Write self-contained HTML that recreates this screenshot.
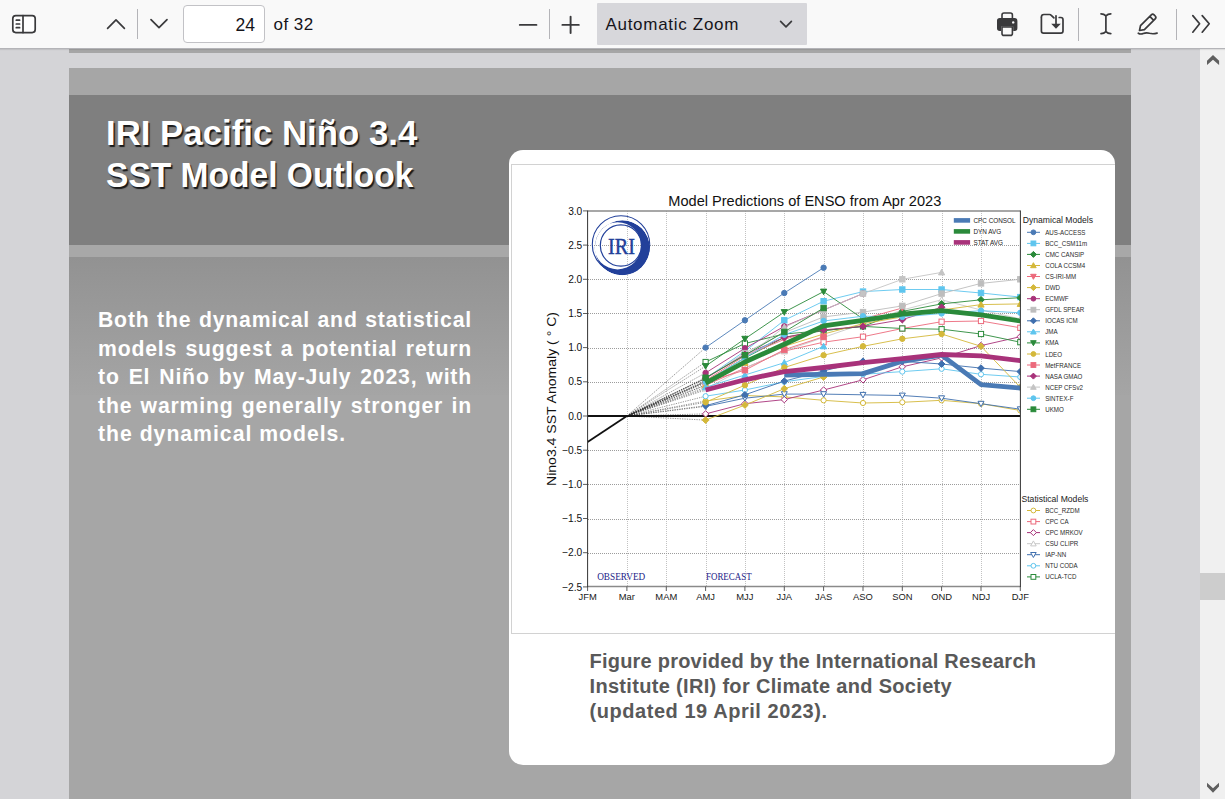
<!DOCTYPE html>
<html><head><meta charset="utf-8">
<style>
html,body{margin:0;padding:0;width:1225px;height:799px;overflow:hidden;background:#d4d4d7;font-family:"Liberation Sans",sans-serif;}
.abs{position:absolute;}
#tb{left:0;top:0;width:1225px;height:48px;background:#f9f9f9;border-bottom:1px solid #b4b4b8;z-index:5;box-shadow:0 1px 1px rgba(0,0,0,0.08);}
.sep{position:absolute;width:1px;background:#b4b4b8;}
#pageinput{left:183px;top:5px;width:82px;height:37.5px;border:1px solid #c2c2c6;border-radius:4px;background:#fff;box-sizing:border-box;}
#prevbot{left:69px;top:48px;width:1062px;height:5px;background:#a6a6a6;}
#page{left:69px;top:68px;width:1062px;height:731px;background:#a6a6a6;overflow:hidden;}
#band{left:0;top:27px;width:1062px;height:150px;background:#7f7f7f;}
#strip{left:0;top:177px;width:1062px;height:12px;background:#a8a8a8;}
#grad{left:0;top:189px;width:1062px;height:138px;background:linear-gradient(#929292,#a5a5a5);}
.ttl{left:36.8px;color:#fff;font-weight:bold;font-size:35.5px;line-height:42px;text-shadow:1.5px 1.5px 1px #1a1a1a;white-space:nowrap;transform-origin:0 0;}
.bl{left:29px;width:374px;height:28.4px;color:#fff;font-weight:bold;font-size:21.2px;letter-spacing:0.82px;line-height:28.4px;text-align:justify;text-align-last:justify;overflow:visible;}
#box{left:508.5px;top:150px;width:606.5px;height:615px;background:#fff;border-radius:14px;}
#imgb{left:511px;top:164px;width:604px;height:470px;border:1px solid #d2d2d2;border-right:none;box-sizing:border-box;}
#cap{left:589.5px;top:648.7px;color:#595959;font-weight:bold;font-size:20px;line-height:25.2px;letter-spacing:0.32px;white-space:nowrap;}
#sb{left:1200px;top:48px;width:25px;height:751px;background:#f0f0f0;}
#thumb{left:1200px;top:573px;width:25px;height:27px;background:#cdcdcd;}
svg text{font-family:"Liberation Sans",sans-serif;}
</style></head><body>
<div id="tb" class="abs">
 <svg class="abs" style="left:0;top:0" width="1225" height="48">
  <g fill="none" stroke="#3a3a3c" stroke-width="1.7" stroke-linecap="round" stroke-linejoin="round">
   <rect x="12.8" y="15.6" width="22.4" height="17" rx="3" fill="#fff"/>
   <line x1="23" y1="15.6" x2="23" y2="32.6"/>
   <line x1="16.3" y1="20.2" x2="19.6" y2="20.2"/><line x1="16.3" y1="24" x2="19.6" y2="24"/><line x1="16.3" y1="27.7" x2="19.6" y2="27.7"/>
   <polyline points="107.6,28.3 116,19.9 124.4,28.3"/>
   <polyline points="151,19.6 159,27.6 167,19.6"/>
   <line x1="519.8" y1="24.9" x2="536.4" y2="24.9" stroke-width="1.9"/>
   <line x1="562.4" y1="24.9" x2="578.8" y2="24.9" stroke-width="1.9"/><line x1="570.6" y1="16.7" x2="570.6" y2="33.1" stroke-width="1.9"/>
   <path d="M1041.4,17 a2.5,2.5 0 0 1 2.5,-2.5 h5.6 a2.5,2.5 0 0 1 1.8,0.8 l2.6,2.6" />
   <path d="M1059.2,17.5 h1.6 a2.2,2.2 0 0 1 2.2,2.2 v11.3 a2.2,2.2 0 0 1 -2.2,2.2 h-17.2 a2.2,2.2 0 0 1 -2.2,-2.2 v-13.5"/>
   <line x1="1056" y1="15.8" x2="1056" y2="25"/>
   <path d="M1101,13.8 q3,0 4.9,2 q1.9,-2 4.9,-2 M1101,33.6 q3,0 4.9,-2 q1.9,2 4.9,2 M1105.9,15.8 v15.8"/>
   <path d="M1139.5,30.5 l1,-4.8 l10.8,-10.8 a2,2 0 0 1 2.8,0 l1.1,1.1 a2,2 0 0 1 0,2.8 l-10.8,10.8 z M1149.8,16.4 l3.9,3.9"/>
   <path d="M1138.3,33.2 q2.2,1.4 5,0.3 q3,-1.2 6.2,-0.2 q3.5,1 7.6,-0.2"/>
   <polyline points="1192.8,15.6 1199.6,23.8 1192.8,32.2"/><polyline points="1202.2,15.6 1209.2,23.8 1202.2,32.2"/>
  </g>
  <path d="M1051.2,23.8 h9.6 l-4.8,5 z" fill="#3a3a3c"/>
  <g fill="#3a3a3c">
   <path d="M1001.2,18.6 v-3.6 a2.8,2.8 0 0 1 2.8,-2.8 h6.4 a2.8,2.8 0 0 1 2.8,2.8 v3.6 h-1.6 v-3.6 a1.2,1.2 0 0 0 -1.2,-1.2 h-6.4 a1.2,1.2 0 0 0 -1.2,1.2 v3.6 z"/>
   <path d="M999.8,18 h14.8 a2.8,2.8 0 0 1 2.8,2.8 v7.4 a2.8,2.8 0 0 1 -2.8,2.8 h-1.4 v-4.4 h-12.2 v4.4 h-1.2 a2.8,2.8 0 0 1 -2.8,-2.8 v-7.4 a2.8,2.8 0 0 1 2.8,-2.8 z"/>
   <path d="M1001.2,26.2 h12 v7.2 a2.8,2.8 0 0 1 -2.8,2.8 h-6.4 a2.8,2.8 0 0 1 -2.8,-2.8 z M1002.8,27.8 v5.6 a1.2,1.2 0 0 0 1.2,1.2 h6.4 a1.2,1.2 0 0 0 1.2,-1.2 v-5.6 z" fill-rule="evenodd"/>
  </g>
  <circle cx="1013.2" cy="22.4" r="1.2" fill="#f9f9fb"/>
 </svg>
 <div class="sep" style="left:137px;top:9px;height:30px;"></div>
 <div class="sep" style="left:549px;top:9px;height:30px;"></div>
 <div class="sep" style="left:1078px;top:8px;height:33px;"></div>
 <div class="sep" style="left:1175.5px;top:8.5px;height:31.5px;"></div>
 <div id="pageinput" class="abs"></div>
 <div class="abs" style="left:200px;top:12.9px;width:55px;text-align:right;font-size:17.5px;line-height:24px;color:#15141a;">24</div>
 <div class="abs" style="left:273.5px;top:12.9px;font-size:17px;letter-spacing:0.45px;line-height:24px;color:#15141a;">of 32</div>
 <div class="abs" style="left:597px;top:3px;width:210px;height:42px;background:#d7d7db;border-radius:1px;"></div>
 <div class="abs" style="left:605.5px;top:12.9px;font-size:17px;letter-spacing:0.7px;line-height:24px;color:#15141a;">Automatic Zoom</div>
 <svg class="abs" style="left:770px;top:10px" width="30" height="30"><polyline points="10.6,11.4 16,16.8 21.4,11.4" fill="none" stroke="#3a3a3c" stroke-width="1.7" stroke-linecap="round" stroke-linejoin="round"/></svg>
</div>
<div id="prevbot" class="abs"></div>
<div id="page" class="abs">
 <div id="band" class="abs"></div>
 <div id="strip" class="abs"></div>
 <div id="grad" class="abs"></div>
 <div class="abs ttl" style="top:43.6px;transform:scaleX(0.98);">IRI Pacific Niño 3.4</div>
 <div class="abs ttl" style="top:85.8px;transform:scaleX(0.945);">SST Model Outlook</div>
 <div class="bl abs" style="top:238.3px">Both the dynamical and statistical</div>
 <div class="bl abs" style="top:266.7px">models suggest a potential return</div>
 <div class="bl abs" style="top:295.1px">to El Niño by May-July 2023, with</div>
 <div class="bl abs" style="top:323.5px">the warming generally stronger in</div>
 <div class="abs" style="left:29px;top:351.9px;color:#fff;font-weight:bold;font-size:21.2px;letter-spacing:1.0px;line-height:28.4px;white-space:nowrap;">the dynamical models.</div>
</div>
<div id="box" class="abs"></div>
<div id="imgb" class="abs"></div>
<svg class="abs" style="left:0;top:0" width="1225" height="799">
<line x1="627.5" y1="211" x2="627.5" y2="587" stroke="#c2c2c2" stroke-width="1" stroke-dasharray="1,1"/>
<line x1="666.5" y1="211" x2="666.5" y2="587" stroke="#c2c2c2" stroke-width="1" stroke-dasharray="1,1"/>
<line x1="706.5" y1="211" x2="706.5" y2="587" stroke="#c2c2c2" stroke-width="1" stroke-dasharray="1,1"/>
<line x1="745.5" y1="211" x2="745.5" y2="587" stroke="#c2c2c2" stroke-width="1" stroke-dasharray="1,1"/>
<line x1="784.5" y1="211" x2="784.5" y2="587" stroke="#c2c2c2" stroke-width="1" stroke-dasharray="1,1"/>
<line x1="824.5" y1="211" x2="824.5" y2="587" stroke="#c2c2c2" stroke-width="1" stroke-dasharray="1,1"/>
<line x1="863.5" y1="211" x2="863.5" y2="587" stroke="#c2c2c2" stroke-width="1" stroke-dasharray="1,1"/>
<line x1="902.5" y1="211" x2="902.5" y2="587" stroke="#c2c2c2" stroke-width="1" stroke-dasharray="1,1"/>
<line x1="942.5" y1="211" x2="942.5" y2="587" stroke="#c2c2c2" stroke-width="1" stroke-dasharray="1,1"/>
<line x1="981.5" y1="211" x2="981.5" y2="587" stroke="#c2c2c2" stroke-width="1" stroke-dasharray="1,1"/>
<line x1="588" y1="553.5" x2="1020" y2="553.5" stroke="#9c9c9c" stroke-width="1" stroke-dasharray="1,1"/>
<line x1="588" y1="519.5" x2="1020" y2="519.5" stroke="#9c9c9c" stroke-width="1" stroke-dasharray="1,1"/>
<line x1="588" y1="484.5" x2="1020" y2="484.5" stroke="#9c9c9c" stroke-width="1" stroke-dasharray="1,1"/>
<line x1="588" y1="450.5" x2="1020" y2="450.5" stroke="#9c9c9c" stroke-width="1" stroke-dasharray="1,1"/>
<line x1="588" y1="382.5" x2="1020" y2="382.5" stroke="#9c9c9c" stroke-width="1" stroke-dasharray="1,1"/>
<line x1="588" y1="348.5" x2="1020" y2="348.5" stroke="#9c9c9c" stroke-width="1" stroke-dasharray="1,1"/>
<line x1="588" y1="313.5" x2="1020" y2="313.5" stroke="#9c9c9c" stroke-width="1" stroke-dasharray="1,1"/>
<line x1="588" y1="279.5" x2="1020" y2="279.5" stroke="#9c9c9c" stroke-width="1" stroke-dasharray="1,1"/>
<line x1="588" y1="245.5" x2="1020" y2="245.5" stroke="#9c9c9c" stroke-width="1" stroke-dasharray="1,1"/>
<g fill="none" stroke="#22409a"><circle cx="621" cy="244.4" r="28.7" stroke-width="1.1"/><circle cx="620.9" cy="245.5" r="20.6" stroke-width="1.2"/></g>
<clipPath id="lc"><circle cx="622.3" cy="247.8" r="27.5"/></clipPath>
<path clip-path="url(#lc)" fill="#22409a" fill-rule="evenodd" d="M649.8,247.8 a27.5,27.5 0 1 1 -55,0 a27.5,27.5 0 1 1 55,0 Z M641.2,245.8 a23.6,23.6 0 1 1 -47.2,0 a23.6,23.6 0 1 1 47.2,0 Z"/>
<text x="621.5" y="253.5" text-anchor="middle" style="font-family:&quot;Liberation Serif&quot;,serif" font-size="23.5" fill="#22409a" stroke="#22409a" stroke-width="0.45" textLength="27" lengthAdjust="spacingAndGlyphs">IRI</text>
<defs><clipPath id="pc"><rect x="587.6" y="210" width="432.7" height="377"/></clipPath></defs><g clip-path="url(#pc)">
<line x1="626.9" y1="416.0" x2="705.6" y2="347.6" stroke="#333" stroke-width="0.5" stroke-dasharray="1.3,1.1"/>
<line x1="626.9" y1="416.0" x2="705.6" y2="378.4" stroke="#333" stroke-width="0.5" stroke-dasharray="1.3,1.1"/>
<line x1="626.9" y1="416.0" x2="705.6" y2="381.8" stroke="#333" stroke-width="0.5" stroke-dasharray="1.3,1.1"/>
<line x1="626.9" y1="416.0" x2="705.6" y2="385.2" stroke="#333" stroke-width="0.5" stroke-dasharray="1.3,1.1"/>
<line x1="626.9" y1="416.0" x2="705.6" y2="380.5" stroke="#333" stroke-width="0.5" stroke-dasharray="1.3,1.1"/>
<line x1="626.9" y1="416.0" x2="705.6" y2="420.1" stroke="#333" stroke-width="0.5" stroke-dasharray="1.3,1.1"/>
<line x1="626.9" y1="416.0" x2="705.6" y2="372.9" stroke="#333" stroke-width="0.5" stroke-dasharray="1.3,1.1"/>
<line x1="626.9" y1="416.0" x2="705.6" y2="378.4" stroke="#333" stroke-width="0.5" stroke-dasharray="1.3,1.1"/>
<line x1="626.9" y1="416.0" x2="705.6" y2="405.7" stroke="#333" stroke-width="0.5" stroke-dasharray="1.3,1.1"/>
<line x1="626.9" y1="416.0" x2="705.6" y2="387.3" stroke="#333" stroke-width="0.5" stroke-dasharray="1.3,1.1"/>
<line x1="626.9" y1="416.0" x2="705.6" y2="366.1" stroke="#333" stroke-width="0.5" stroke-dasharray="1.3,1.1"/>
<line x1="626.9" y1="416.0" x2="705.6" y2="402.3" stroke="#333" stroke-width="0.5" stroke-dasharray="1.3,1.1"/>
<line x1="626.9" y1="416.0" x2="705.6" y2="381.8" stroke="#333" stroke-width="0.5" stroke-dasharray="1.3,1.1"/>
<line x1="626.9" y1="416.0" x2="705.6" y2="378.4" stroke="#333" stroke-width="0.5" stroke-dasharray="1.3,1.1"/>
<line x1="626.9" y1="416.0" x2="705.6" y2="381.8" stroke="#333" stroke-width="0.5" stroke-dasharray="1.3,1.1"/>
<line x1="626.9" y1="416.0" x2="705.6" y2="381.8" stroke="#333" stroke-width="0.5" stroke-dasharray="1.3,1.1"/>
<line x1="626.9" y1="416.0" x2="705.6" y2="377.7" stroke="#333" stroke-width="0.5" stroke-dasharray="1.3,1.1"/>
<line x1="626.9" y1="416.0" x2="705.6" y2="401.0" stroke="#333" stroke-width="0.5" stroke-dasharray="1.3,1.1"/>
<line x1="626.9" y1="416.0" x2="705.6" y2="385.2" stroke="#333" stroke-width="0.5" stroke-dasharray="1.3,1.1"/>
<line x1="626.9" y1="416.0" x2="705.6" y2="413.9" stroke="#333" stroke-width="0.5" stroke-dasharray="1.3,1.1"/>
<line x1="626.9" y1="416.0" x2="705.6" y2="388.7" stroke="#333" stroke-width="0.5" stroke-dasharray="1.3,1.1"/>
<line x1="626.9" y1="416.0" x2="705.6" y2="406.4" stroke="#333" stroke-width="0.5" stroke-dasharray="1.3,1.1"/>
<line x1="626.9" y1="416.0" x2="705.6" y2="396.2" stroke="#333" stroke-width="0.5" stroke-dasharray="1.3,1.1"/>
<line x1="626.9" y1="416.0" x2="705.6" y2="362.0" stroke="#333" stroke-width="0.5" stroke-dasharray="1.3,1.1"/>
<line x1="626.9" y1="416.0" x2="705.6" y2="383.2" stroke="#333" stroke-width="0.5" stroke-dasharray="1.3,1.1"/>
<line x1="626.9" y1="416.0" x2="705.6" y2="390.0" stroke="#333" stroke-width="0.5" stroke-dasharray="1.3,1.1"/>
<line x1="587.6" y1="416.0" x2="1020.3" y2="416.0" stroke="#111" stroke-width="1.8"/>
<line x1="587.6" y1="442.0" x2="626.9" y2="416.0" stroke="#111" stroke-width="1.8"/>
<polyline points="705.6,401.0 744.9,395.5 784.3,396.9 823.6,400.3 863.0,403.0 902.3,402.3 941.6,400.3 981.0,403.7 1020.3,410.5" fill="none" stroke="#d4b83a" stroke-width="0.9" stroke-linejoin="round"/>
<circle cx="705.6" cy="401.0" r="2.6" fill="white" stroke="#d4b83a" stroke-width="1.0"/>
<circle cx="744.9" cy="395.5" r="2.6" fill="white" stroke="#d4b83a" stroke-width="1.0"/>
<circle cx="784.3" cy="396.9" r="2.6" fill="white" stroke="#d4b83a" stroke-width="1.0"/>
<circle cx="823.6" cy="400.3" r="2.6" fill="white" stroke="#d4b83a" stroke-width="1.0"/>
<circle cx="863.0" cy="403.0" r="2.6" fill="white" stroke="#d4b83a" stroke-width="1.0"/>
<circle cx="902.3" cy="402.3" r="2.6" fill="white" stroke="#d4b83a" stroke-width="1.0"/>
<circle cx="941.6" cy="400.3" r="2.6" fill="white" stroke="#d4b83a" stroke-width="1.0"/>
<circle cx="981.0" cy="403.7" r="2.6" fill="white" stroke="#d4b83a" stroke-width="1.0"/>
<circle cx="1020.3" cy="410.5" r="2.6" fill="white" stroke="#d4b83a" stroke-width="1.0"/>
<polyline points="705.6,385.2 744.9,368.1 784.3,351.1 823.6,342.2 863.0,336.7 902.3,328.5 941.6,321.7 981.0,321.0 1020.3,327.8" fill="none" stroke="#ec6a7c" stroke-width="0.9" stroke-linejoin="round"/>
<rect x="703.0" y="382.6" width="5.2" height="5.2" fill="white" stroke="#ec6a7c" stroke-width="1.0"/>
<rect x="742.3" y="365.5" width="5.2" height="5.2" fill="white" stroke="#ec6a7c" stroke-width="1.0"/>
<rect x="781.7" y="348.5" width="5.2" height="5.2" fill="white" stroke="#ec6a7c" stroke-width="1.0"/>
<rect x="821.0" y="339.6" width="5.2" height="5.2" fill="white" stroke="#ec6a7c" stroke-width="1.0"/>
<rect x="860.4" y="334.1" width="5.2" height="5.2" fill="white" stroke="#ec6a7c" stroke-width="1.0"/>
<rect x="899.7" y="325.9" width="5.2" height="5.2" fill="white" stroke="#ec6a7c" stroke-width="1.0"/>
<rect x="939.0" y="319.1" width="5.2" height="5.2" fill="white" stroke="#ec6a7c" stroke-width="1.0"/>
<rect x="978.4" y="318.4" width="5.2" height="5.2" fill="white" stroke="#ec6a7c" stroke-width="1.0"/>
<rect x="1017.7" y="325.2" width="5.2" height="5.2" fill="white" stroke="#ec6a7c" stroke-width="1.0"/>
<polyline points="705.6,413.9 744.9,403.7 784.3,399.6 823.6,390.0 863.0,379.8 902.3,366.8 941.6,357.9 981.0,345.6 1020.3,336.7" fill="none" stroke="#a8327a" stroke-width="0.9" stroke-linejoin="round"/>
<path d="M705.6,410.7 L708.9,413.9 L705.6,417.2 L702.4,413.9 Z" fill="white" stroke="#a8327a" stroke-width="1.0"/>
<path d="M744.9,400.4 L748.2,403.7 L744.9,406.9 L741.7,403.7 Z" fill="white" stroke="#a8327a" stroke-width="1.0"/>
<path d="M784.3,396.3 L787.5,399.6 L784.3,402.8 L781.0,399.6 Z" fill="white" stroke="#a8327a" stroke-width="1.0"/>
<path d="M823.6,386.8 L826.9,390.0 L823.6,393.3 L820.4,390.0 Z" fill="white" stroke="#a8327a" stroke-width="1.0"/>
<path d="M863.0,376.5 L866.2,379.8 L863.0,383.0 L859.7,379.8 Z" fill="white" stroke="#a8327a" stroke-width="1.0"/>
<path d="M902.3,363.5 L905.5,366.8 L902.3,370.0 L899.0,366.8 Z" fill="white" stroke="#a8327a" stroke-width="1.0"/>
<path d="M941.6,354.6 L944.9,357.9 L941.6,361.1 L938.4,357.9 Z" fill="white" stroke="#a8327a" stroke-width="1.0"/>
<path d="M981.0,342.3 L984.2,345.6 L981.0,348.8 L977.7,345.6 Z" fill="white" stroke="#a8327a" stroke-width="1.0"/>
<path d="M1020.3,333.5 L1023.5,336.7 L1020.3,340.0 L1017.0,336.7 Z" fill="white" stroke="#a8327a" stroke-width="1.0"/>
<polyline points="705.6,388.7 744.9,368.1 784.3,351.1 823.6,337.4 863.0,323.7 902.3,310.0 941.6,299.8 981.0,310.0 1020.3,318.9" fill="none" stroke="#c8c8c8" stroke-width="0.9" stroke-linejoin="round"/>
<path d="M705.6,385.7 L708.6,391.0 L702.6,391.0 Z" fill="white" stroke="#c8c8c8" stroke-width="1.0"/>
<path d="M744.9,365.2 L747.9,370.5 L742.0,370.5 Z" fill="white" stroke="#c8c8c8" stroke-width="1.0"/>
<path d="M784.3,348.1 L787.3,353.4 L781.3,353.4 Z" fill="white" stroke="#c8c8c8" stroke-width="1.0"/>
<path d="M823.6,334.4 L826.6,339.8 L820.6,339.8 Z" fill="white" stroke="#c8c8c8" stroke-width="1.0"/>
<path d="M863.0,320.7 L865.9,326.1 L860.0,326.1 Z" fill="white" stroke="#c8c8c8" stroke-width="1.0"/>
<path d="M902.3,307.1 L905.3,312.4 L899.3,312.4 Z" fill="white" stroke="#c8c8c8" stroke-width="1.0"/>
<path d="M941.6,296.8 L944.6,302.2 L938.6,302.2 Z" fill="white" stroke="#c8c8c8" stroke-width="1.0"/>
<path d="M981.0,307.1 L984.0,312.4 L978.0,312.4 Z" fill="white" stroke="#c8c8c8" stroke-width="1.0"/>
<path d="M1020.3,315.9 L1023.3,321.3 L1017.3,321.3 Z" fill="white" stroke="#c8c8c8" stroke-width="1.0"/>
<polyline points="705.6,406.4 744.9,398.2 784.3,394.1 823.6,394.1 863.0,394.8 902.3,395.5 941.6,398.2 981.0,403.7 1020.3,409.2" fill="none" stroke="#3f6fae" stroke-width="0.9" stroke-linejoin="round"/>
<path d="M705.6,409.4 L708.6,404.0 L702.6,404.0 Z" fill="white" stroke="#3f6fae" stroke-width="1.0"/>
<path d="M744.9,401.2 L747.9,395.8 L742.0,395.8 Z" fill="white" stroke="#3f6fae" stroke-width="1.0"/>
<path d="M784.3,397.1 L787.3,391.7 L781.3,391.7 Z" fill="white" stroke="#3f6fae" stroke-width="1.0"/>
<path d="M823.6,397.1 L826.6,391.7 L820.6,391.7 Z" fill="white" stroke="#3f6fae" stroke-width="1.0"/>
<path d="M863.0,397.8 L865.9,392.4 L860.0,392.4 Z" fill="white" stroke="#3f6fae" stroke-width="1.0"/>
<path d="M902.3,398.5 L905.3,393.1 L899.3,393.1 Z" fill="white" stroke="#3f6fae" stroke-width="1.0"/>
<path d="M941.6,401.2 L944.6,395.8 L938.6,395.8 Z" fill="white" stroke="#3f6fae" stroke-width="1.0"/>
<path d="M981.0,406.7 L984.0,401.3 L978.0,401.3 Z" fill="white" stroke="#3f6fae" stroke-width="1.0"/>
<path d="M1020.3,412.2 L1023.3,406.8 L1017.3,406.8 Z" fill="white" stroke="#3f6fae" stroke-width="1.0"/>
<polyline points="705.6,396.2 744.9,390.0 784.3,381.8 823.6,376.4 863.0,374.3 902.3,371.6 941.6,368.8 981.0,374.3 1020.3,377.0" fill="none" stroke="#5ec5ee" stroke-width="0.9" stroke-linejoin="round"/>
<circle cx="705.6" cy="396.2" r="2.6" fill="white" stroke="#5ec5ee" stroke-width="1.0"/>
<circle cx="744.9" cy="390.0" r="2.6" fill="white" stroke="#5ec5ee" stroke-width="1.0"/>
<circle cx="784.3" cy="381.8" r="2.6" fill="white" stroke="#5ec5ee" stroke-width="1.0"/>
<circle cx="823.6" cy="376.4" r="2.6" fill="white" stroke="#5ec5ee" stroke-width="1.0"/>
<circle cx="863.0" cy="374.3" r="2.6" fill="white" stroke="#5ec5ee" stroke-width="1.0"/>
<circle cx="902.3" cy="371.6" r="2.6" fill="white" stroke="#5ec5ee" stroke-width="1.0"/>
<circle cx="941.6" cy="368.8" r="2.6" fill="white" stroke="#5ec5ee" stroke-width="1.0"/>
<circle cx="981.0" cy="374.3" r="2.6" fill="white" stroke="#5ec5ee" stroke-width="1.0"/>
<circle cx="1020.3" cy="377.0" r="2.6" fill="white" stroke="#5ec5ee" stroke-width="1.0"/>
<polyline points="705.6,362.0 744.9,343.5 784.3,334.0 823.6,330.6 863.0,326.4 902.3,328.5 941.6,329.2 981.0,334.0 1020.3,342.2" fill="none" stroke="#2a8a3a" stroke-width="0.9" stroke-linejoin="round"/>
<rect x="703.0" y="359.4" width="5.2" height="5.2" fill="white" stroke="#2a8a3a" stroke-width="1.0"/>
<rect x="742.3" y="340.9" width="5.2" height="5.2" fill="white" stroke="#2a8a3a" stroke-width="1.0"/>
<rect x="781.7" y="331.4" width="5.2" height="5.2" fill="white" stroke="#2a8a3a" stroke-width="1.0"/>
<rect x="821.0" y="327.9" width="5.2" height="5.2" fill="white" stroke="#2a8a3a" stroke-width="1.0"/>
<rect x="860.4" y="323.8" width="5.2" height="5.2" fill="white" stroke="#2a8a3a" stroke-width="1.0"/>
<rect x="899.7" y="325.9" width="5.2" height="5.2" fill="white" stroke="#2a8a3a" stroke-width="1.0"/>
<rect x="939.0" y="326.6" width="5.2" height="5.2" fill="white" stroke="#2a8a3a" stroke-width="1.0"/>
<rect x="978.4" y="331.4" width="5.2" height="5.2" fill="white" stroke="#2a8a3a" stroke-width="1.0"/>
<rect x="1017.7" y="339.6" width="5.2" height="5.2" fill="white" stroke="#2a8a3a" stroke-width="1.0"/>
<polyline points="705.6,347.6 744.9,320.3 784.3,293.0 823.6,267.7" fill="none" stroke="#4a7ab5" stroke-width="0.9" stroke-linejoin="round"/>
<circle cx="705.6" cy="347.6" r="2.7" fill="#4a7ab5" stroke="#4a7ab5" stroke-width="1.0"/>
<circle cx="744.9" cy="320.3" r="2.7" fill="#4a7ab5" stroke="#4a7ab5" stroke-width="1.0"/>
<circle cx="784.3" cy="293.0" r="2.7" fill="#4a7ab5" stroke="#4a7ab5" stroke-width="1.0"/>
<circle cx="823.6" cy="267.7" r="2.7" fill="#4a7ab5" stroke="#4a7ab5" stroke-width="1.0"/>
<polyline points="705.6,378.4 744.9,351.1 784.3,320.3 823.6,301.2 863.0,291.6 902.3,289.5 941.6,289.5 981.0,293.0 1020.3,297.1" fill="none" stroke="#5ec5ee" stroke-width="0.9" stroke-linejoin="round"/>
<rect x="702.9" y="375.7" width="5.4" height="5.4" fill="#5ec5ee" stroke="#5ec5ee" stroke-width="1.0"/>
<rect x="742.2" y="348.4" width="5.4" height="5.4" fill="#5ec5ee" stroke="#5ec5ee" stroke-width="1.0"/>
<rect x="781.6" y="317.6" width="5.4" height="5.4" fill="#5ec5ee" stroke="#5ec5ee" stroke-width="1.0"/>
<rect x="820.9" y="298.5" width="5.4" height="5.4" fill="#5ec5ee" stroke="#5ec5ee" stroke-width="1.0"/>
<rect x="860.3" y="288.9" width="5.4" height="5.4" fill="#5ec5ee" stroke="#5ec5ee" stroke-width="1.0"/>
<rect x="899.6" y="286.8" width="5.4" height="5.4" fill="#5ec5ee" stroke="#5ec5ee" stroke-width="1.0"/>
<rect x="938.9" y="286.8" width="5.4" height="5.4" fill="#5ec5ee" stroke="#5ec5ee" stroke-width="1.0"/>
<rect x="978.3" y="290.3" width="5.4" height="5.4" fill="#5ec5ee" stroke="#5ec5ee" stroke-width="1.0"/>
<rect x="1017.6" y="294.4" width="5.4" height="5.4" fill="#5ec5ee" stroke="#5ec5ee" stroke-width="1.0"/>
<polyline points="705.6,381.8 744.9,357.9 784.3,337.4 823.6,330.6 863.0,326.4 902.3,311.4 941.6,303.9 981.0,299.8 1020.3,297.7" fill="none" stroke="#2a8a3a" stroke-width="0.9" stroke-linejoin="round"/>
<path d="M705.6,378.4 L709.0,381.8 L705.6,385.2 L702.2,381.8 Z" fill="#2a8a3a" stroke="#2a8a3a" stroke-width="1.0"/>
<path d="M744.9,354.5 L748.3,357.9 L744.9,361.3 L741.6,357.9 Z" fill="#2a8a3a" stroke="#2a8a3a" stroke-width="1.0"/>
<path d="M784.3,334.0 L787.7,337.4 L784.3,340.8 L780.9,337.4 Z" fill="#2a8a3a" stroke="#2a8a3a" stroke-width="1.0"/>
<path d="M823.6,327.2 L827.0,330.6 L823.6,333.9 L820.2,330.6 Z" fill="#2a8a3a" stroke="#2a8a3a" stroke-width="1.0"/>
<path d="M863.0,323.1 L866.3,326.4 L863.0,329.8 L859.6,326.4 Z" fill="#2a8a3a" stroke="#2a8a3a" stroke-width="1.0"/>
<path d="M902.3,308.0 L905.7,311.4 L902.3,314.8 L898.9,311.4 Z" fill="#2a8a3a" stroke="#2a8a3a" stroke-width="1.0"/>
<path d="M941.6,300.5 L945.0,303.9 L941.6,307.3 L938.3,303.9 Z" fill="#2a8a3a" stroke="#2a8a3a" stroke-width="1.0"/>
<path d="M981.0,296.4 L984.3,299.8 L981.0,303.2 L977.6,299.8 Z" fill="#2a8a3a" stroke="#2a8a3a" stroke-width="1.0"/>
<path d="M1020.3,294.4 L1023.7,297.7 L1020.3,301.1 L1016.9,297.7 Z" fill="#2a8a3a" stroke="#2a8a3a" stroke-width="1.0"/>
<polyline points="705.6,385.2 744.9,362.7 784.3,346.3 823.6,334.0 863.0,323.7 902.3,316.9 941.6,310.0 981.0,304.6 1020.3,303.9" fill="none" stroke="#d4b83a" stroke-width="0.9" stroke-linejoin="round"/>
<path d="M705.6,382.1 L708.7,387.7 L702.5,387.7 Z" fill="#d4b83a" stroke="#d4b83a" stroke-width="1.0"/>
<path d="M744.9,359.6 L748.1,365.2 L741.8,365.2 Z" fill="#d4b83a" stroke="#d4b83a" stroke-width="1.0"/>
<path d="M784.3,343.2 L787.4,348.8 L781.2,348.8 Z" fill="#d4b83a" stroke="#d4b83a" stroke-width="1.0"/>
<path d="M823.6,330.9 L826.7,336.5 L820.5,336.5 Z" fill="#d4b83a" stroke="#d4b83a" stroke-width="1.0"/>
<path d="M863.0,320.6 L866.1,326.2 L859.8,326.2 Z" fill="#d4b83a" stroke="#d4b83a" stroke-width="1.0"/>
<path d="M902.3,313.8 L905.4,319.4 L899.2,319.4 Z" fill="#d4b83a" stroke="#d4b83a" stroke-width="1.0"/>
<path d="M941.6,306.9 L944.7,312.5 L938.5,312.5 Z" fill="#d4b83a" stroke="#d4b83a" stroke-width="1.0"/>
<path d="M981.0,301.5 L984.1,307.1 L977.9,307.1 Z" fill="#d4b83a" stroke="#d4b83a" stroke-width="1.0"/>
<path d="M1020.3,300.8 L1023.4,306.4 L1017.2,306.4 Z" fill="#d4b83a" stroke="#d4b83a" stroke-width="1.0"/>
<polyline points="705.6,380.5 744.9,355.8 784.3,339.4 823.6,327.1 863.0,318.9 902.3,308.0" fill="none" stroke="#ec6a7c" stroke-width="0.9" stroke-linejoin="round"/>
<path d="M705.6,383.6 L708.7,378.0 L702.5,378.0 Z" fill="#ec6a7c" stroke="#ec6a7c" stroke-width="1.0"/>
<path d="M744.9,358.9 L748.1,353.4 L741.8,353.4 Z" fill="#ec6a7c" stroke="#ec6a7c" stroke-width="1.0"/>
<path d="M784.3,342.5 L787.4,337.0 L781.2,337.0 Z" fill="#ec6a7c" stroke="#ec6a7c" stroke-width="1.0"/>
<path d="M823.6,330.2 L826.7,324.6 L820.5,324.6 Z" fill="#ec6a7c" stroke="#ec6a7c" stroke-width="1.0"/>
<path d="M863.0,322.0 L866.1,316.4 L859.8,316.4 Z" fill="#ec6a7c" stroke="#ec6a7c" stroke-width="1.0"/>
<path d="M902.3,311.1 L905.4,305.5 L899.2,305.5 Z" fill="#ec6a7c" stroke="#ec6a7c" stroke-width="1.0"/>
<polyline points="705.6,420.1 744.9,405.1 784.3,388.7 823.6,377.0" fill="none" stroke="#d4b83a" stroke-width="0.9" stroke-linejoin="round"/>
<path d="M705.6,416.7 L709.0,420.1 L705.6,423.5 L702.2,420.1 Z" fill="#d4b83a" stroke="#d4b83a" stroke-width="1.0"/>
<path d="M744.9,401.7 L748.3,405.1 L744.9,408.4 L741.6,405.1 Z" fill="#d4b83a" stroke="#d4b83a" stroke-width="1.0"/>
<path d="M784.3,385.3 L787.7,388.7 L784.3,392.0 L780.9,388.7 Z" fill="#d4b83a" stroke="#d4b83a" stroke-width="1.0"/>
<path d="M823.6,373.7 L827.0,377.0 L823.6,380.4 L820.2,377.0 Z" fill="#d4b83a" stroke="#d4b83a" stroke-width="1.0"/>
<polyline points="705.6,372.9 744.9,348.3 784.3,326.4 823.6,310.0 863.0,293.6" fill="none" stroke="#a8327a" stroke-width="0.9" stroke-linejoin="round"/>
<circle cx="705.6" cy="372.9" r="2.7" fill="#a8327a" stroke="#a8327a" stroke-width="1.0"/>
<circle cx="744.9" cy="348.3" r="2.7" fill="#a8327a" stroke="#a8327a" stroke-width="1.0"/>
<circle cx="784.3" cy="326.4" r="2.7" fill="#a8327a" stroke="#a8327a" stroke-width="1.0"/>
<circle cx="823.6" cy="310.0" r="2.7" fill="#a8327a" stroke="#a8327a" stroke-width="1.0"/>
<circle cx="863.0" cy="293.6" r="2.7" fill="#a8327a" stroke="#a8327a" stroke-width="1.0"/>
<polyline points="705.6,378.4 744.9,353.1 784.3,332.6 823.6,316.9 863.0,312.1 902.3,305.9 941.6,293.6 981.0,283.4 1020.3,279.3" fill="none" stroke="#bdbdbd" stroke-width="0.9" stroke-linejoin="round"/>
<rect x="702.9" y="375.7" width="5.4" height="5.4" fill="#bdbdbd" stroke="#bdbdbd" stroke-width="1.0"/>
<rect x="742.2" y="350.4" width="5.4" height="5.4" fill="#bdbdbd" stroke="#bdbdbd" stroke-width="1.0"/>
<rect x="781.6" y="329.9" width="5.4" height="5.4" fill="#bdbdbd" stroke="#bdbdbd" stroke-width="1.0"/>
<rect x="820.9" y="314.2" width="5.4" height="5.4" fill="#bdbdbd" stroke="#bdbdbd" stroke-width="1.0"/>
<rect x="860.3" y="309.4" width="5.4" height="5.4" fill="#bdbdbd" stroke="#bdbdbd" stroke-width="1.0"/>
<rect x="899.6" y="303.2" width="5.4" height="5.4" fill="#bdbdbd" stroke="#bdbdbd" stroke-width="1.0"/>
<rect x="938.9" y="290.9" width="5.4" height="5.4" fill="#bdbdbd" stroke="#bdbdbd" stroke-width="1.0"/>
<rect x="978.3" y="280.7" width="5.4" height="5.4" fill="#bdbdbd" stroke="#bdbdbd" stroke-width="1.0"/>
<rect x="1017.6" y="276.6" width="5.4" height="5.4" fill="#bdbdbd" stroke="#bdbdbd" stroke-width="1.0"/>
<polyline points="705.6,405.7 744.9,394.8 784.3,381.1 823.6,370.9 863.0,361.3 902.3,361.3 941.6,364.0 981.0,368.1 1020.3,371.6" fill="none" stroke="#3f6fae" stroke-width="0.9" stroke-linejoin="round"/>
<path d="M705.6,402.4 L709.0,405.7 L705.6,409.1 L702.2,405.7 Z" fill="#3f6fae" stroke="#3f6fae" stroke-width="1.0"/>
<path d="M744.9,391.4 L748.3,394.8 L744.9,398.2 L741.6,394.8 Z" fill="#3f6fae" stroke="#3f6fae" stroke-width="1.0"/>
<path d="M784.3,377.8 L787.7,381.1 L784.3,384.5 L780.9,381.1 Z" fill="#3f6fae" stroke="#3f6fae" stroke-width="1.0"/>
<path d="M823.6,367.5 L827.0,370.9 L823.6,374.3 L820.2,370.9 Z" fill="#3f6fae" stroke="#3f6fae" stroke-width="1.0"/>
<path d="M863.0,357.9 L866.3,361.3 L863.0,364.7 L859.6,361.3 Z" fill="#3f6fae" stroke="#3f6fae" stroke-width="1.0"/>
<path d="M902.3,357.9 L905.7,361.3 L902.3,364.7 L898.9,361.3 Z" fill="#3f6fae" stroke="#3f6fae" stroke-width="1.0"/>
<path d="M941.6,360.7 L945.0,364.0 L941.6,367.4 L938.3,364.0 Z" fill="#3f6fae" stroke="#3f6fae" stroke-width="1.0"/>
<path d="M981.0,364.8 L984.3,368.1 L981.0,371.5 L977.6,368.1 Z" fill="#3f6fae" stroke="#3f6fae" stroke-width="1.0"/>
<path d="M1020.3,368.2 L1023.7,371.6 L1020.3,374.9 L1016.9,371.6 Z" fill="#3f6fae" stroke="#3f6fae" stroke-width="1.0"/>
<polyline points="705.6,387.3 744.9,375.0 784.3,362.7 823.6,346.3" fill="none" stroke="#5ec5ee" stroke-width="0.9" stroke-linejoin="round"/>
<path d="M705.6,384.2 L708.7,389.8 L702.5,389.8 Z" fill="#5ec5ee" stroke="#5ec5ee" stroke-width="1.0"/>
<path d="M744.9,371.9 L748.1,377.5 L741.8,377.5 Z" fill="#5ec5ee" stroke="#5ec5ee" stroke-width="1.0"/>
<path d="M784.3,359.6 L787.4,365.2 L781.2,365.2 Z" fill="#5ec5ee" stroke="#5ec5ee" stroke-width="1.0"/>
<path d="M823.6,343.2 L826.7,348.8 L820.5,348.8 Z" fill="#5ec5ee" stroke="#5ec5ee" stroke-width="1.0"/>
<polyline points="705.6,366.1 744.9,338.8 784.3,312.1 823.6,291.6 863.0,318.9" fill="none" stroke="#2a8a3a" stroke-width="0.9" stroke-linejoin="round"/>
<path d="M705.6,369.2 L708.7,363.6 L702.5,363.6 Z" fill="#2a8a3a" stroke="#2a8a3a" stroke-width="1.0"/>
<path d="M744.9,341.9 L748.1,336.3 L741.8,336.3 Z" fill="#2a8a3a" stroke="#2a8a3a" stroke-width="1.0"/>
<path d="M784.3,315.2 L787.4,309.6 L781.2,309.6 Z" fill="#2a8a3a" stroke="#2a8a3a" stroke-width="1.0"/>
<path d="M823.6,294.7 L826.7,289.1 L820.5,289.1 Z" fill="#2a8a3a" stroke="#2a8a3a" stroke-width="1.0"/>
<path d="M863.0,322.0 L866.1,316.4 L859.8,316.4 Z" fill="#2a8a3a" stroke="#2a8a3a" stroke-width="1.0"/>
<polyline points="705.6,402.3 744.9,385.2 784.3,367.5 823.6,355.2 863.0,346.3 902.3,338.8 941.6,334.0 981.0,346.3 1020.3,387.3" fill="none" stroke="#d4b83a" stroke-width="0.9" stroke-linejoin="round"/>
<circle cx="705.6" cy="402.3" r="2.7" fill="#d4b83a" stroke="#d4b83a" stroke-width="1.0"/>
<circle cx="744.9" cy="385.2" r="2.7" fill="#d4b83a" stroke="#d4b83a" stroke-width="1.0"/>
<circle cx="784.3" cy="367.5" r="2.7" fill="#d4b83a" stroke="#d4b83a" stroke-width="1.0"/>
<circle cx="823.6" cy="355.2" r="2.7" fill="#d4b83a" stroke="#d4b83a" stroke-width="1.0"/>
<circle cx="863.0" cy="346.3" r="2.7" fill="#d4b83a" stroke="#d4b83a" stroke-width="1.0"/>
<circle cx="902.3" cy="338.8" r="2.7" fill="#d4b83a" stroke="#d4b83a" stroke-width="1.0"/>
<circle cx="941.6" cy="334.0" r="2.7" fill="#d4b83a" stroke="#d4b83a" stroke-width="1.0"/>
<path d="M981.0,342.9 L984.3,346.3 L981.0,349.6 L977.6,346.3 Z" fill="#d4b83a" stroke="#d4b83a" stroke-width="1.0"/>
<circle cx="1020.3" cy="387.3" r="2.7" fill="#d4b83a" stroke="#d4b83a" stroke-width="1.0"/>
<polyline points="705.6,381.8 744.9,370.2 784.3,349.7 823.6,336.7" fill="none" stroke="#ec6a7c" stroke-width="0.9" stroke-linejoin="round"/>
<rect x="702.9" y="379.1" width="5.4" height="5.4" fill="#ec6a7c" stroke="#ec6a7c" stroke-width="1.0"/>
<rect x="742.2" y="367.5" width="5.4" height="5.4" fill="#ec6a7c" stroke="#ec6a7c" stroke-width="1.0"/>
<rect x="781.6" y="347.0" width="5.4" height="5.4" fill="#ec6a7c" stroke="#ec6a7c" stroke-width="1.0"/>
<rect x="820.9" y="334.0" width="5.4" height="5.4" fill="#ec6a7c" stroke="#ec6a7c" stroke-width="1.0"/>
<polyline points="705.6,378.4 744.9,354.5 784.3,337.4 823.6,329.9 863.0,326.4 902.3,319.6 941.6,307.3" fill="none" stroke="#a8327a" stroke-width="0.9" stroke-linejoin="round"/>
<path d="M705.6,375.0 L709.0,378.4 L705.6,381.8 L702.2,378.4 Z" fill="#a8327a" stroke="#a8327a" stroke-width="1.0"/>
<path d="M744.9,351.1 L748.3,354.5 L744.9,357.9 L741.6,354.5 Z" fill="#a8327a" stroke="#a8327a" stroke-width="1.0"/>
<path d="M784.3,334.0 L787.7,337.4 L784.3,340.8 L780.9,337.4 Z" fill="#a8327a" stroke="#a8327a" stroke-width="1.0"/>
<path d="M823.6,326.5 L827.0,329.9 L823.6,333.2 L820.2,329.9 Z" fill="#a8327a" stroke="#a8327a" stroke-width="1.0"/>
<path d="M863.0,323.1 L866.3,326.4 L863.0,329.8 L859.6,326.4 Z" fill="#a8327a" stroke="#a8327a" stroke-width="1.0"/>
<path d="M902.3,316.2 L905.7,319.6 L902.3,323.0 L898.9,319.6 Z" fill="#a8327a" stroke="#a8327a" stroke-width="1.0"/>
<path d="M941.6,303.9 L945.0,307.3 L941.6,310.7 L938.3,307.3 Z" fill="#a8327a" stroke="#a8327a" stroke-width="1.0"/>
<polyline points="705.6,381.8 744.9,357.9 784.3,327.1 823.6,310.0 863.0,293.6 902.3,279.3 941.6,272.4" fill="none" stroke="#c4c4c4" stroke-width="0.9" stroke-linejoin="round"/>
<path d="M705.6,378.7 L708.7,384.3 L702.5,384.3 Z" fill="#c4c4c4" stroke="#c4c4c4" stroke-width="1.0"/>
<path d="M744.9,354.8 L748.1,360.4 L741.8,360.4 Z" fill="#c4c4c4" stroke="#c4c4c4" stroke-width="1.0"/>
<path d="M784.3,324.0 L787.4,329.6 L781.2,329.6 Z" fill="#c4c4c4" stroke="#c4c4c4" stroke-width="1.0"/>
<path d="M823.6,306.9 L826.7,312.5 L820.5,312.5 Z" fill="#c4c4c4" stroke="#c4c4c4" stroke-width="1.0"/>
<rect x="860.3" y="290.9" width="5.4" height="5.4" fill="#c4c4c4" stroke="#c4c4c4" stroke-width="1.0"/>
<rect x="899.6" y="276.6" width="5.4" height="5.4" fill="#c4c4c4" stroke="#c4c4c4" stroke-width="1.0"/>
<path d="M941.6,269.3 L944.7,274.9 L938.5,274.9 Z" fill="#c4c4c4" stroke="#c4c4c4" stroke-width="1.0"/>
<polyline points="705.6,381.8 744.9,357.9 784.3,334.7 823.6,321.0 863.0,316.2 902.3,316.9 941.6,313.5 981.0,310.7 1020.3,312.8" fill="none" stroke="#5ec5ee" stroke-width="0.9" stroke-linejoin="round"/>
<circle cx="705.6" cy="381.8" r="2.7" fill="#5ec5ee" stroke="#5ec5ee" stroke-width="1.0"/>
<circle cx="744.9" cy="357.9" r="2.7" fill="#5ec5ee" stroke="#5ec5ee" stroke-width="1.0"/>
<circle cx="784.3" cy="334.7" r="2.7" fill="#5ec5ee" stroke="#5ec5ee" stroke-width="1.0"/>
<circle cx="823.6" cy="321.0" r="2.7" fill="#5ec5ee" stroke="#5ec5ee" stroke-width="1.0"/>
<circle cx="863.0" cy="316.2" r="2.7" fill="#5ec5ee" stroke="#5ec5ee" stroke-width="1.0"/>
<circle cx="902.3" cy="316.9" r="2.7" fill="#5ec5ee" stroke="#5ec5ee" stroke-width="1.0"/>
<circle cx="941.6" cy="313.5" r="2.7" fill="#5ec5ee" stroke="#5ec5ee" stroke-width="1.0"/>
<circle cx="981.0" cy="310.7" r="2.7" fill="#5ec5ee" stroke="#5ec5ee" stroke-width="1.0"/>
<circle cx="1020.3" cy="312.8" r="2.7" fill="#5ec5ee" stroke="#5ec5ee" stroke-width="1.0"/>
<polyline points="705.6,377.7 744.9,355.2 784.3,331.9 823.6,308.0" fill="none" stroke="#2a8a3a" stroke-width="0.9" stroke-linejoin="round"/>
<rect x="702.9" y="375.0" width="5.4" height="5.4" fill="#2a8a3a" stroke="#2a8a3a" stroke-width="1.0"/>
<rect x="742.2" y="352.5" width="5.4" height="5.4" fill="#2a8a3a" stroke="#2a8a3a" stroke-width="1.0"/>
<rect x="781.6" y="329.2" width="5.4" height="5.4" fill="#2a8a3a" stroke="#2a8a3a" stroke-width="1.0"/>
<rect x="820.9" y="305.3" width="5.4" height="5.4" fill="#2a8a3a" stroke="#2a8a3a" stroke-width="1.0"/>
<polyline points="784.3,375.0 823.6,374.3 863.0,373.6 902.3,361.3 941.6,355.2 981.0,384.6 1020.3,388.0" fill="none" stroke="#4a7ab5" stroke-width="4.8" stroke-linejoin="round"/>
<polyline points="705.6,383.2 744.9,362.0 784.3,344.2 823.6,325.8 863.0,320.3 902.3,314.1 941.6,310.7 981.0,314.8 1020.3,321.0" fill="none" stroke="#2a8a3a" stroke-width="4.8" stroke-linejoin="round"/>
<polyline points="705.6,390.0 744.9,379.8 784.3,371.6 823.6,367.5 863.0,362.7 902.3,358.6 941.6,354.5 981.0,355.8 1020.3,360.6" fill="none" stroke="#a8327a" stroke-width="4.8" stroke-linejoin="round"/>
</g>
<line x1="587.6" y1="210.9" x2="1020.3" y2="210.9" stroke="#8a8a8a" stroke-width="1.5"/>
<line x1="587.6" y1="586.6" x2="1020.3" y2="586.6" stroke="#8a8a8a" stroke-width="1.5"/>
<line x1="587.6" y1="210.5" x2="587.6" y2="587" stroke="#333" stroke-width="1"/>
<line x1="1020.4" y1="210.5" x2="1020.4" y2="587" stroke="#333" stroke-width="1"/>
<line x1="583" y1="586.9" x2="587.6" y2="586.9" stroke="#333" stroke-width="0.8"/>
<text x="582.3" y="590.5" text-anchor="end" font-size="10.2" fill="#111">−2.5</text>
<line x1="583" y1="552.7" x2="587.6" y2="552.7" stroke="#333" stroke-width="0.8"/>
<text x="582.3" y="556.3" text-anchor="end" font-size="10.2" fill="#111">−2.0</text>
<line x1="583" y1="518.5" x2="587.6" y2="518.5" stroke="#333" stroke-width="0.8"/>
<text x="582.3" y="522.1" text-anchor="end" font-size="10.2" fill="#111">−1.5</text>
<line x1="583" y1="484.4" x2="587.6" y2="484.4" stroke="#333" stroke-width="0.8"/>
<text x="582.3" y="488.0" text-anchor="end" font-size="10.2" fill="#111">−1.0</text>
<line x1="583" y1="450.2" x2="587.6" y2="450.2" stroke="#333" stroke-width="0.8"/>
<text x="582.3" y="453.8" text-anchor="end" font-size="10.2" fill="#111">−0.5</text>
<line x1="583" y1="416.0" x2="587.6" y2="416.0" stroke="#333" stroke-width="0.8"/>
<text x="582.3" y="419.6" text-anchor="end" font-size="10.2" fill="#111">0.0</text>
<line x1="583" y1="381.8" x2="587.6" y2="381.8" stroke="#333" stroke-width="0.8"/>
<text x="582.3" y="385.4" text-anchor="end" font-size="10.2" fill="#111">0.5</text>
<line x1="583" y1="347.6" x2="587.6" y2="347.6" stroke="#333" stroke-width="0.8"/>
<text x="582.3" y="351.2" text-anchor="end" font-size="10.2" fill="#111">1.0</text>
<line x1="583" y1="313.5" x2="587.6" y2="313.5" stroke="#333" stroke-width="0.8"/>
<text x="582.3" y="317.1" text-anchor="end" font-size="10.2" fill="#111">1.5</text>
<line x1="583" y1="279.3" x2="587.6" y2="279.3" stroke="#333" stroke-width="0.8"/>
<text x="582.3" y="282.9" text-anchor="end" font-size="10.2" fill="#111">2.0</text>
<line x1="583" y1="245.1" x2="587.6" y2="245.1" stroke="#333" stroke-width="0.8"/>
<text x="582.3" y="248.7" text-anchor="end" font-size="10.2" fill="#111">2.5</text>
<line x1="583" y1="210.9" x2="587.6" y2="210.9" stroke="#333" stroke-width="0.8"/>
<text x="582.3" y="214.5" text-anchor="end" font-size="10.2" fill="#111">3.0</text>
<line x1="587.6" y1="586.6" x2="587.6" y2="591" stroke="#333" stroke-width="0.8"/>
<text x="587.6" y="600.4" text-anchor="middle" font-size="9.4" fill="#1a1a1a">JFM</text>
<line x1="626.9" y1="586.6" x2="626.9" y2="591" stroke="#333" stroke-width="0.8"/>
<text x="626.9" y="600.4" text-anchor="middle" font-size="9.4" fill="#1a1a1a">Mar</text>
<line x1="666.3" y1="586.6" x2="666.3" y2="591" stroke="#333" stroke-width="0.8"/>
<text x="666.3" y="600.4" text-anchor="middle" font-size="9.4" fill="#1a1a1a">MAM</text>
<line x1="705.6" y1="586.6" x2="705.6" y2="591" stroke="#333" stroke-width="0.8"/>
<text x="705.6" y="600.4" text-anchor="middle" font-size="9.4" fill="#1a1a1a">AMJ</text>
<line x1="744.9" y1="586.6" x2="744.9" y2="591" stroke="#333" stroke-width="0.8"/>
<text x="744.9" y="600.4" text-anchor="middle" font-size="9.4" fill="#1a1a1a">MJJ</text>
<line x1="784.3" y1="586.6" x2="784.3" y2="591" stroke="#333" stroke-width="0.8"/>
<text x="784.3" y="600.4" text-anchor="middle" font-size="9.4" fill="#1a1a1a">JJA</text>
<line x1="823.6" y1="586.6" x2="823.6" y2="591" stroke="#333" stroke-width="0.8"/>
<text x="823.6" y="600.4" text-anchor="middle" font-size="9.4" fill="#1a1a1a">JAS</text>
<line x1="863.0" y1="586.6" x2="863.0" y2="591" stroke="#333" stroke-width="0.8"/>
<text x="863.0" y="600.4" text-anchor="middle" font-size="9.4" fill="#1a1a1a">ASO</text>
<line x1="902.3" y1="586.6" x2="902.3" y2="591" stroke="#333" stroke-width="0.8"/>
<text x="902.3" y="600.4" text-anchor="middle" font-size="9.4" fill="#1a1a1a">SON</text>
<line x1="941.6" y1="586.6" x2="941.6" y2="591" stroke="#333" stroke-width="0.8"/>
<text x="941.6" y="600.4" text-anchor="middle" font-size="9.4" fill="#1a1a1a">OND</text>
<line x1="981.0" y1="586.6" x2="981.0" y2="591" stroke="#333" stroke-width="0.8"/>
<text x="981.0" y="600.4" text-anchor="middle" font-size="9.4" fill="#1a1a1a">NDJ</text>
<line x1="1020.3" y1="586.6" x2="1020.3" y2="591" stroke="#333" stroke-width="0.8"/>
<text x="1020.3" y="600.4" text-anchor="middle" font-size="9.4" fill="#1a1a1a">DJF</text>
<text x="668.3" y="206" font-size="13.9" fill="#111" textLength="273" lengthAdjust="spacingAndGlyphs">Model Predictions of ENSO from Apr 2023</text>
<text transform="translate(555.6,399) rotate(-90)" text-anchor="middle" font-size="13.6" fill="#111" textLength="174" lengthAdjust="spacingAndGlyphs">Nino3.4 SST Anomaly ( ° C)</text>
<text x="597.2" y="580" style="font-family:&quot;Liberation Serif&quot;,serif" font-size="10" fill="#1c1c88" textLength="48" lengthAdjust="spacingAndGlyphs">OBSERVED</text>
<text x="706" y="580" style="font-family:&quot;Liberation Serif&quot;,serif" font-size="10" fill="#1c1c88" textLength="45.6" lengthAdjust="spacingAndGlyphs">FORECAST</text>
<line x1="953.8" y1="220.4" x2="970.1" y2="220.4" stroke="#4a7ab5" stroke-width="4.6"/>
<text transform="translate(973.4,222.9) scale(0.886,1)" font-size="7.2" fill="#1a1a1a">CPC CONSOL</text>
<line x1="953.8" y1="231.4" x2="970.1" y2="231.4" stroke="#2a8a3a" stroke-width="4.6"/>
<text transform="translate(973.4,233.9) scale(0.886,1)" font-size="7.2" fill="#1a1a1a">DYN AVG</text>
<line x1="953.8" y1="242.4" x2="970.1" y2="242.4" stroke="#a8327a" stroke-width="4.6"/>
<text transform="translate(973.4,244.9) scale(0.886,1)" font-size="7.2" fill="#1a1a1a">STAT AVG</text>
<text x="1022.8" y="223.4" font-size="8.6" fill="#222">Dynamical Models</text>
<line x1="1027" y1="232.3" x2="1040" y2="232.3" stroke="#4a7ab5" stroke-width="1"/>
<circle cx="1033.4" cy="232.3" r="2.4" fill="#4a7ab5" stroke="#4a7ab5" stroke-width="1.0"/>
<text transform="translate(1045.2,234.8) scale(0.886,1)" font-size="7" fill="#2a2a2a">AUS-ACCESS</text>
<line x1="1027" y1="243.4" x2="1040" y2="243.4" stroke="#5ec5ee" stroke-width="1"/>
<rect x="1031.0" y="241.0" width="4.8" height="4.8" fill="#5ec5ee" stroke="#5ec5ee" stroke-width="1.0"/>
<text transform="translate(1045.2,245.9) scale(0.886,1)" font-size="7" fill="#2a2a2a">BCC_CSM11m</text>
<line x1="1027" y1="254.4" x2="1040" y2="254.4" stroke="#2a8a3a" stroke-width="1"/>
<path d="M1033.4,251.4 L1036.4,254.4 L1033.4,257.4 L1030.4,254.4 Z" fill="#2a8a3a" stroke="#2a8a3a" stroke-width="1.0"/>
<text transform="translate(1045.2,256.9) scale(0.886,1)" font-size="7" fill="#2a2a2a">CMC CANSIP</text>
<line x1="1027" y1="265.5" x2="1040" y2="265.5" stroke="#d4b83a" stroke-width="1"/>
<path d="M1033.4,262.7 L1036.2,267.7 L1030.6,267.7 Z" fill="#d4b83a" stroke="#d4b83a" stroke-width="1.0"/>
<text transform="translate(1045.2,268.0) scale(0.886,1)" font-size="7" fill="#2a2a2a">COLA CCSM4</text>
<line x1="1027" y1="276.5" x2="1040" y2="276.5" stroke="#ec6a7c" stroke-width="1"/>
<path d="M1033.4,279.3 L1036.2,274.3 L1030.6,274.3 Z" fill="#ec6a7c" stroke="#ec6a7c" stroke-width="1.0"/>
<text transform="translate(1045.2,279.0) scale(0.886,1)" font-size="7" fill="#2a2a2a">CS-IRI-MM</text>
<line x1="1027" y1="287.6" x2="1040" y2="287.6" stroke="#d4b83a" stroke-width="1"/>
<path d="M1033.4,284.6 L1036.4,287.6 L1033.4,290.6 L1030.4,287.6 Z" fill="#d4b83a" stroke="#d4b83a" stroke-width="1.0"/>
<text transform="translate(1045.2,290.1) scale(0.886,1)" font-size="7" fill="#2a2a2a">DWD</text>
<line x1="1027" y1="298.7" x2="1040" y2="298.7" stroke="#a8327a" stroke-width="1"/>
<circle cx="1033.4" cy="298.7" r="2.4" fill="#a8327a" stroke="#a8327a" stroke-width="1.0"/>
<text transform="translate(1045.2,301.2) scale(0.886,1)" font-size="7" fill="#2a2a2a">ECMWF</text>
<line x1="1027" y1="309.7" x2="1040" y2="309.7" stroke="#bdbdbd" stroke-width="1"/>
<rect x="1031.0" y="307.3" width="4.8" height="4.8" fill="#bdbdbd" stroke="#bdbdbd" stroke-width="1.0"/>
<text transform="translate(1045.2,312.2) scale(0.886,1)" font-size="7" fill="#2a2a2a">GFDL SPEAR</text>
<line x1="1027" y1="320.8" x2="1040" y2="320.8" stroke="#3f6fae" stroke-width="1"/>
<path d="M1033.4,317.8 L1036.4,320.8 L1033.4,323.8 L1030.4,320.8 Z" fill="#3f6fae" stroke="#3f6fae" stroke-width="1.0"/>
<text transform="translate(1045.2,323.3) scale(0.886,1)" font-size="7" fill="#2a2a2a">IOCAS ICM</text>
<line x1="1027" y1="331.8" x2="1040" y2="331.8" stroke="#5ec5ee" stroke-width="1"/>
<path d="M1033.4,329.1 L1036.2,334.0 L1030.6,334.0 Z" fill="#5ec5ee" stroke="#5ec5ee" stroke-width="1.0"/>
<text transform="translate(1045.2,334.3) scale(0.886,1)" font-size="7" fill="#2a2a2a">JMA</text>
<line x1="1027" y1="342.9" x2="1040" y2="342.9" stroke="#2a8a3a" stroke-width="1"/>
<path d="M1033.4,345.7 L1036.2,340.7 L1030.6,340.7 Z" fill="#2a8a3a" stroke="#2a8a3a" stroke-width="1.0"/>
<text transform="translate(1045.2,345.4) scale(0.886,1)" font-size="7" fill="#2a2a2a">KMA</text>
<line x1="1027" y1="354.0" x2="1040" y2="354.0" stroke="#d4b83a" stroke-width="1"/>
<circle cx="1033.4" cy="354.0" r="2.4" fill="#d4b83a" stroke="#d4b83a" stroke-width="1.0"/>
<text transform="translate(1045.2,356.5) scale(0.886,1)" font-size="7" fill="#2a2a2a">LDEO</text>
<line x1="1027" y1="365.0" x2="1040" y2="365.0" stroke="#ec6a7c" stroke-width="1"/>
<rect x="1031.0" y="362.6" width="4.8" height="4.8" fill="#ec6a7c" stroke="#ec6a7c" stroke-width="1.0"/>
<text transform="translate(1045.2,367.5) scale(0.886,1)" font-size="7" fill="#2a2a2a">MetFRANCE</text>
<line x1="1027" y1="376.1" x2="1040" y2="376.1" stroke="#a8327a" stroke-width="1"/>
<path d="M1033.4,373.1 L1036.4,376.1 L1033.4,379.1 L1030.4,376.1 Z" fill="#a8327a" stroke="#a8327a" stroke-width="1.0"/>
<text transform="translate(1045.2,378.6) scale(0.886,1)" font-size="7" fill="#2a2a2a">NASA GMAO</text>
<line x1="1027" y1="387.1" x2="1040" y2="387.1" stroke="#c4c4c4" stroke-width="1"/>
<path d="M1033.4,384.4 L1036.2,389.3 L1030.6,389.3 Z" fill="#c4c4c4" stroke="#c4c4c4" stroke-width="1.0"/>
<text transform="translate(1045.2,389.6) scale(0.886,1)" font-size="7" fill="#2a2a2a">NCEP CFSv2</text>
<line x1="1027" y1="398.2" x2="1040" y2="398.2" stroke="#5ec5ee" stroke-width="1"/>
<circle cx="1033.4" cy="398.2" r="2.4" fill="#5ec5ee" stroke="#5ec5ee" stroke-width="1.0"/>
<text transform="translate(1045.2,400.7) scale(0.886,1)" font-size="7" fill="#2a2a2a">SINTEX-F</text>
<line x1="1027" y1="409.3" x2="1040" y2="409.3" stroke="#2a8a3a" stroke-width="1"/>
<rect x="1031.0" y="406.9" width="4.8" height="4.8" fill="#2a8a3a" stroke="#2a8a3a" stroke-width="1.0"/>
<text transform="translate(1045.2,411.8) scale(0.886,1)" font-size="7" fill="#2a2a2a">UKMO</text>
<text x="1021.5" y="501.5" font-size="8.6" fill="#222">Statistical Models</text>
<line x1="1027" y1="510.5" x2="1040" y2="510.5" stroke="#d4b83a" stroke-width="1"/>
<circle cx="1033.4" cy="510.5" r="2.4" fill="white" stroke="#d4b83a" stroke-width="1.0"/>
<text transform="translate(1045.2,513.0) scale(0.886,1)" font-size="7" fill="#2a2a2a">BCC_RZDM</text>
<line x1="1027" y1="521.6" x2="1040" y2="521.6" stroke="#ec6a7c" stroke-width="1"/>
<rect x="1031.0" y="519.2" width="4.8" height="4.8" fill="white" stroke="#ec6a7c" stroke-width="1.0"/>
<text transform="translate(1045.2,524.1) scale(0.886,1)" font-size="7" fill="#2a2a2a">CPC CA</text>
<line x1="1027" y1="532.6" x2="1040" y2="532.6" stroke="#a8327a" stroke-width="1"/>
<path d="M1033.4,529.6 L1036.4,532.6 L1033.4,535.6 L1030.4,532.6 Z" fill="white" stroke="#a8327a" stroke-width="1.0"/>
<text transform="translate(1045.2,535.1) scale(0.886,1)" font-size="7" fill="#2a2a2a">CPC MRKOV</text>
<line x1="1027" y1="543.7" x2="1040" y2="543.7" stroke="#c8c8c8" stroke-width="1"/>
<path d="M1033.4,540.9 L1036.2,545.9 L1030.6,545.9 Z" fill="white" stroke="#c8c8c8" stroke-width="1.0"/>
<text transform="translate(1045.2,546.2) scale(0.886,1)" font-size="7" fill="#2a2a2a">CSU CLIPR</text>
<line x1="1027" y1="554.7" x2="1040" y2="554.7" stroke="#3f6fae" stroke-width="1"/>
<path d="M1033.4,557.5 L1036.2,552.5 L1030.6,552.5 Z" fill="white" stroke="#3f6fae" stroke-width="1.0"/>
<text transform="translate(1045.2,557.2) scale(0.886,1)" font-size="7" fill="#2a2a2a">IAP-NN</text>
<line x1="1027" y1="565.8" x2="1040" y2="565.8" stroke="#5ec5ee" stroke-width="1"/>
<circle cx="1033.4" cy="565.8" r="2.4" fill="white" stroke="#5ec5ee" stroke-width="1.0"/>
<text transform="translate(1045.2,568.3) scale(0.886,1)" font-size="7" fill="#2a2a2a">NTU CODA</text>
<line x1="1027" y1="576.9" x2="1040" y2="576.9" stroke="#2a8a3a" stroke-width="1"/>
<rect x="1031.0" y="574.5" width="4.8" height="4.8" fill="white" stroke="#2a8a3a" stroke-width="1.0"/>
<text transform="translate(1045.2,579.4) scale(0.886,1)" font-size="7" fill="#2a2a2a">UCLA-TCD</text>
</svg>
<div id="cap" class="abs"><span style="letter-spacing:0.22px">Figure provided by the International Research</span><br>Institute (IRI) for Climate and Society<br><span style="letter-spacing:0.55px">(updated 19 April 2023).</span></div>
<div id="sb" class="abs"></div>
<div id="thumb" class="abs"></div>
<svg class="abs" style="left:1200px;top:48px" width="25" height="751">
 <path d="M7,16.9 L7,12.8 L13,7 L19.1,12.8 L19.1,16.9 L13,11.7 Z" fill="#5f5f5f"/>
 <path d="M7,734.7 L7,738.6 L13,744.7 L19,738.6 L19,734.7 L13,740.3 Z" fill="#5f5f5f"/>
</svg>
</body></html>
